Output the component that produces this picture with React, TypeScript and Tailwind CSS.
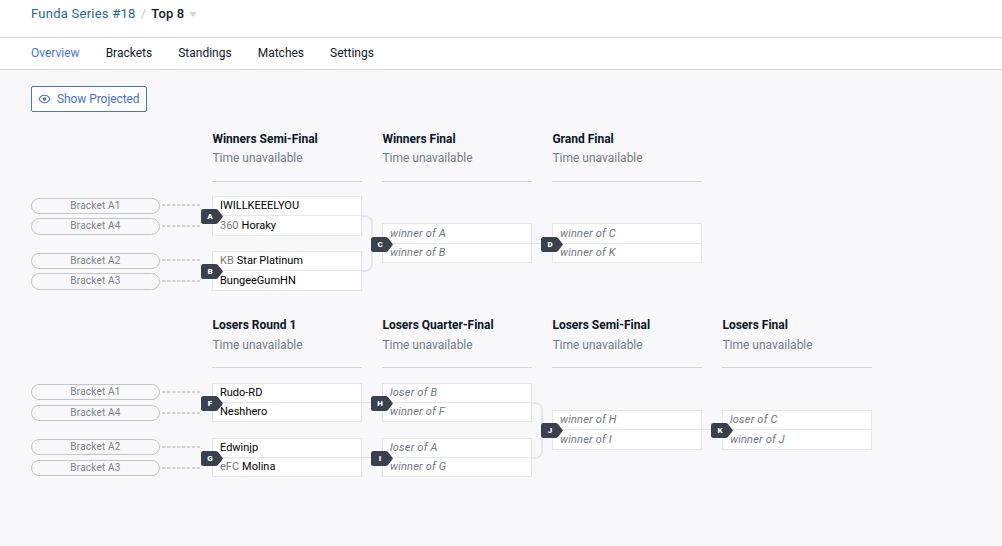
import { Fragment } from "react"

type Entrant = { name: string; prefix?: string; pending?: boolean }
type Match = { id: string; top: Entrant; bottom: Entrant }
type Link = "merge" | "line" | "pair"

const tabs = ["Overview", "Brackets", "Standings", "Matches", "Settings"]

const p = (name: string, prefix?: string): Entrant => ({ name, prefix })
const tbd = (name: string): Entrant => ({ name, pending: true })

const A: Match = { id: "A", top: p("IWILLKEEELYOU"), bottom: p("Horaky", "360") }
const B: Match = { id: "B", top: p("Star Platinum", "KB"), bottom: p("BungeeGumHN") }
const C: Match = { id: "C", top: tbd("winner of A"), bottom: tbd("winner of B") }
const D: Match = { id: "D", top: tbd("winner of C"), bottom: tbd("winner of K") }
const F: Match = { id: "F", top: p("Rudo-RD"), bottom: p("Neshhero") }
const G: Match = { id: "G", top: p("Edwinjp"), bottom: p("Molina", "eFC") }
const H: Match = { id: "H", top: tbd("loser of B"), bottom: tbd("winner of F") }
const I: Match = { id: "I", top: tbd("loser of A"), bottom: tbd("winner of G") }
const J: Match = { id: "J", top: tbd("winner of H"), bottom: tbd("winner of I") }
const K: Match = { id: "K", top: tbd("loser of C"), bottom: tbd("winner of J") }

const winners = [
  { title: "Winners Semi-Final", matches: [A, B] },
  { title: "Winners Final", matches: [C] },
  { title: "Grand Final", matches: [D] },
]

const losers = [
  { title: "Losers Round 1", matches: [F, G] },
  { title: "Losers Quarter-Final", matches: [H, I] },
  { title: "Losers Semi-Final", matches: [J] },
  { title: "Losers Final", matches: [K] },
]

const topHeavy = "h-10 grid-rows-[20px_19px] *:last:pb-[2px]"
const bottomHeavy = "h-10 grid-rows-[19px_20px] *:first:pb-[2px]"
const compact = "h-[39px] grid-rows-[19px_19px] *:pb-[2px]"

const rowSizes: Record<string, string> = {
  A: bottomHeavy,
  B: bottomHeavy,
  C: topHeavy,
  D: topHeavy,
  F: compact,
  G: compact,
  H: compact,
  I: compact,
  J: bottomHeavy,
  K: bottomHeavy,
}

function EyeIcon() {
  return (
    <svg width="13" height="10" viewBox="0 0 13 10" fill="none" stroke="#4a72c9">
      <path d="M1 5C2.2 2.5 4.2 1.2 6.5 1.2S10.8 2.5 12 5C10.8 7.5 8.8 8.8 6.5 8.8S2.2 7.5 1 5z" strokeWidth="1.1" />
      <circle cx="6.5" cy="5" r="1.8" fill="#4a72c9" stroke="none" />
    </svg>
  )
}

function Badge({ id }: { id: string }) {
  const low = rowSizes[id] === topHeavy
  return (
    <div className={"absolute -left-[11px] z-10 h-[15px] w-[22px] " + (low ? "top-[14px]" : "top-[13px]")}>
      <svg className="absolute inset-0" width="22" height="15" viewBox="0 0 22 15">
        <path d="M2.5 0H14.5Q16 0 17 1L22 7.5L17 14Q16 15 14.5 15H2.5Q0 15 0 12.5V2.5Q0 0 2.5 0z" fill="#3b404e" />
      </svg>
      <span className="relative block w-[18px] text-center text-[8px] font-black leading-[16px] text-white">
        {id}
      </span>
    </div>
  )
}

function Row({ entrant }: { entrant: Entrant }) {
  if (entrant.pending) {
    return (
      <div className="flex items-center border-t border-[#e5e6ea] pl-[7px] text-[11px] italic leading-none tracking-[0.2px] text-[#70757f]">
        {entrant.name}
      </div>
    )
  }
  return (
    <div className="flex items-center border-t border-[#e5e6ea] pl-[7px] text-[11px] leading-none text-black">
      {entrant.prefix && <span className="mr-[3px] text-[#777]">{entrant.prefix}</span>}
      {entrant.name}
    </div>
  )
}

function MatchCard({ match }: { match: Match }) {
  return (
    <div className="relative">
      <Badge id={match.id} />
      <div className={"grid w-[150px] border-x border-b border-[#e5e6ea] bg-white " + rowSizes[match.id]}>
        <Row entrant={match.top} />
        <Row entrant={match.bottom} />
      </div>
    </div>
  )
}

function RoundHeader({ title, lower }: { title: string; lower?: boolean }) {
  return (
    <div className="h-[52px] w-[150px] border-b border-[#d3d5da]">
      <div className="pl-[0.4px] text-[12px] font-bold leading-[18px] text-[#0b1524]">{title}</div>
      <div className={"pl-[0.4px] text-[12px] leading-5 text-[#737a86] " + (lower ? "mt-px" : "")}>
        Time unavailable
      </div>
    </div>
  )
}

function Seeds({ lower }: { lower?: boolean }) {
  return (
    <div className={"flex w-[181px] shrink-0 flex-col gap-[18px] " + (lower ? "pt-px" : "pt-[2px]")}>
      {[["A1", "A4"], ["A2", "A3"]].map((pair) => (
        <div key={pair[0]} className={"flex flex-col " + (lower ? "gap-[5px]" : "gap-1")}>
          {pair.map((seed, i) => (
            <div key={seed} className="flex items-center gap-[2px]">
              <div
                className={
                  "flex w-[129px] items-center justify-center rounded-full border border-[#c3c5ca] text-[10px] leading-none tracking-[0.2px] text-[#7b808a] " +
                  (i && !lower ? "h-[17px] pb-px" : "h-4")
                }
              >
                Bracket {seed}
              </div>
              <svg className={lower ? "" : "mb-[2px]"} width="38" height="2" viewBox="0 0 38 2">
                <path d="M0 1H38" stroke="#c6c8cd" strokeWidth="1.6" strokeDasharray="3.4 1.6" />
              </svg>
            </div>
          ))}
        </div>
      ))}
    </div>
  )
}

function Connector({ kind, lower }: { kind: Link; lower?: boolean }) {
  if (kind === "merge") {
    return (
      <div className="w-5 pt-[19px]">
        <div className="h-[57px] w-[11px] rounded-r-[8px] border-2 border-l-0 border-[#e5e6ea]" />
      </div>
    )
  }
  if (kind === "pair") {
    return (
      <div className="flex w-5 flex-col gap-[54px] pt-[19px]">
        <div className="h-px bg-[#e1e2e6]" />
        <div className="h-px bg-[#e1e2e6]" />
      </div>
    )
  }
  return (
    <div className={"w-5 " + (lower ? "pt-[46px]" : "pt-[47px]")}>
      <div className="h-px bg-[#e1e2e6]" />
    </div>
  )
}

function Side({ rounds, links, lower }: {
  rounds: { title: string; matches: Match[] }[]
  links: Link[]
  lower?: boolean
}) {
  return (
    <section>
      <div className="flex gap-5 pl-[181px]">
        {rounds.map((r) => <RoundHeader key={r.title} title={r.title} lower={lower} />)}
      </div>
      <div className={"flex " + (lower ? "mt-[15px]" : "mt-[14px]")}>
        <Seeds lower={lower} />
        {rounds.map((r, i) => (
          <Fragment key={r.title}>
            <div
              className={
                "flex flex-col " +
                (lower ? "gap-4 " : "gap-[15px] ") +
                (r.matches.length === 1 ? "pt-[27px]" : "")
              }
            >
              {r.matches.map((m) => <MatchCard key={m.id} match={m} />)}
            </div>
            {links[i] && <Connector kind={links[i]} lower={lower} />}
          </Fragment>
        ))}
      </div>
    </section>
  )
}

export default function App() {
  return (
    <div className="flex h-[546px] w-[1002px] flex-col overflow-hidden bg-[#f8f8fb] font-['Roboto',sans-serif]">
      <header className="flex h-[38px] items-center border-b border-[#d5d7dc] bg-white pb-[9px] pl-[31px] text-[13px] tracking-[0.25px]">
        <a className="text-[#1b6a8e]">Funda Series #18</a>
        <span className="mx-[5px] text-[#c5c9d0]">/</span>
        <span className="font-medium tracking-[0.1px] text-[#111827]">Top 8</span>
        <svg className="ml-[5px]" width="8" height="5" viewBox="0 0 8 5">
          <path d="M0 0H8L4 5z" fill="#d0d3da" />
        </svg>
      </header>

      <nav className="flex h-8 items-center gap-[26px] border-b border-[#d5d7dc] bg-white pb-[2px] pl-[31px] text-[12px]">
        {tabs.map((tab, i) => (
          <a key={tab} className={i === 0 ? "text-[#4a72c9]" : "text-[#0f1a2c]"}>{tab}</a>
        ))}
      </nav>

      <main className="pl-[31px] pt-4">
        <button className="flex h-[26px] w-[116px] items-center gap-[6px] whitespace-nowrap rounded-[2px] border border-[#4a72c9] bg-white pl-[6px] text-[12px] tracking-[-0.07px] text-[#4a72c9]">
          <EyeIcon />
          Show Projected
        </button>
        <div className="mt-[18px] flex flex-col gap-[25px]">
          <Side rounds={winners} links={["merge", "line"]} />
          <Side rounds={losers} links={["pair", "merge", "line"]} lower />
        </div>
      </main>
    </div>
  )
}
